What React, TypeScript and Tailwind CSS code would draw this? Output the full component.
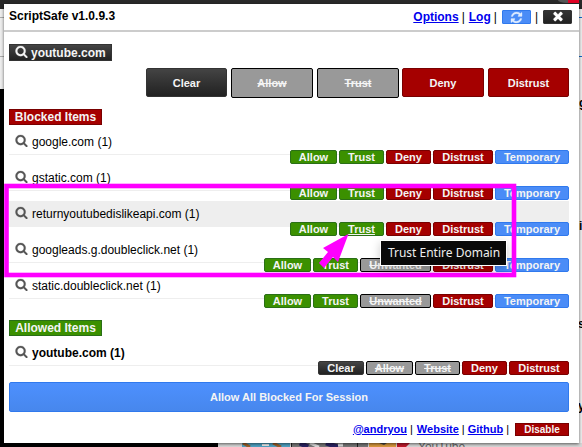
import React from "react";

type Tone = "green" | "red" | "blue" | "dark" | "off";

const tones: Record<Tone, string> = {
  green: "bg-[#3b9000] border-[#2a6f17]",
  red: "bg-[#a50000] border-[#790000]",
  blue: "bg-[#4a8cf7] border-[#3079ed]",
  dark: "bg-linear-to-b from-[#444] to-[#222] border-[#333]",
  off: "bg-[#999] border-black line-through",
};

const widths: Record<string, string> = {
  Allow: "w-[47px]",
  Trust: "w-[45px]",
  Deny: "w-[45px]",
  Distrust: "w-[60px]",
  Temporary: "w-[74px]",
  Unwanted: "w-[71px]",
  Clear: "w-[46px]",
};

const icons = {
  search:
    "M1216 832q0-185-131.5-316.5T768 384 451.5 515.5 320 832t131.5 316.5T768 1280t316.5-131.5T1216 832zm512 832q0 52-38 90t-90 38q-54 0-90-38l-343-342q-179 124-399 124-143 0-273.5-55.5t-225-150-150-225T64 832t55.5-273.5 150-225 225-150T768 128t273.5 55.5 225 150 150 225T1472 832q0 220-124 399l343 343q37 37 37 90z",
  refresh:
    "M1639 1056q0 5-1 7-64 268-268 434.5T892 1664q-146 0-282.5-55T366 1452l-129 129q-19 19-45 19t-45-19-19-45v-448q0-26 19-45t45-19h448q26 0 45 19t19 45-19 45l-137 137q71 66 161 102t187 36q134 0 250-65t186-179q11-17 53-117 8-23 30-23h192q13 0 22.5 9.5t9.5 22.5zm25-800v448q0 26-19 45t-45 19h-448q-26 0-45-19t-19-45 19-45l138-138Q1097 384 896 384q-134 0-250 65T460 628q-11 17-53 117-8 23-30 23H178q-13 0-22.5-9.5T146 736v-7q65-268 270-434.5T896 128q146 0 284 55.5T1425 340l130-129q19-19 45-19t45 19 19 45z",
  times:
    "M1490 1322q0 40-28 68l-136 136q-28 28-68 28t-68-28l-294-294-294 294q-28 28-68 28t-68-28l-136-136q-28-28-28-68t28-68l294-294-294-294q-28-28-28-68t28-68l136-136q28-28 68-28t68 28l294 294 294-294q28-28 68-28t68 28l136 136q28 28 28 68t-28 68l-294 294 294 294q28 28 28 68z",
};

function Icon({ name, className }: { name: keyof typeof icons; className: string }) {
  return (
    <svg viewBox="0 0 1792 1792" fill="currentColor" stroke="currentColor" strokeWidth="30" className={`shrink-0 ${className}`}>
      <path d={icons[name]} />
    </svg>
  );
}

type Btn = [string, Tone];

function Small({ b, underline }: { b: Btn; underline?: boolean }) {
  return (
    <span
      className={`flex h-[14px] items-center justify-center rounded-[2px] border text-[11px] leading-[12px] font-bold text-[#f4f4f4] ${widths[b[0]]} ${tones[b[1]]} ${underline ? "underline" : ""}`}
    >
      {b[0]}
    </span>
  );
}

function Row({ name, buttons, hover, bold }: { name: string; buttons: Btn[]; hover?: boolean; bold?: boolean }) {
  return (
    <div className="h-9">
      <div
        className={`flex h-[26px] items-center border-b border-[#eee] pl-[6px] text-[12px] ${hover ? "bg-[#eee]" : ""} ${bold ? "font-bold" : ""}`}
      >
        <Icon name="search" className="mr-[4px] mb-[3px] size-[13px] text-[#555]" />
        <span>{name} (1)</span>
      </div>
      <div className="relative -mt-[5px] flex justify-end gap-[2px]">
        {buttons.map((b) => (
          <Small key={b[0]} b={b} underline={hover && b[0] === "Trust"} />
        ))}
      </div>
    </div>
  );
}

const full: Btn[] = [["Allow", "green"], ["Trust", "green"], ["Deny", "red"], ["Distrust", "red"], ["Temporary", "blue"]];
const ad: Btn[] = [["Allow", "green"], ["Trust", "green"], ["Unwanted", "off"], ["Distrust", "red"], ["Temporary", "blue"]];
const top: Btn[] = [["Clear", "dark"], ["Allow", "off"], ["Trust", "off"], ["Deny", "red"], ["Distrust", "red"]];
const link = "text-[#0000ee] underline";

function Backdrop() {
  return (
    <svg className="absolute inset-0" width="582" height="447" viewBox="0 0 582 447">
      <rect width="582" height="447" fill="#ededed" />
      <rect width="582" height="9" fill="#292929" />
      <ellipse cx="567" cy="0" rx="9" ry="3" fill="#555" />
      <rect x="568" width="11" height="3" fill="#e00024" />
      <path d="M0 17.5h4M0 56.5h4" stroke="#aaa" />
      <path d="M578 17.5h4M578 56.5h4" stroke="#1266c8" />
      <rect y="89" width="4" height="358" fill="#000" />
      <rect y="443" width="218" height="4" fill="#000" />
      <rect x="218" y="443" width="364" height="4" fill="#d6d6d6" />
      <rect x="242" y="443" width="48" height="4" fill="#4fa3c4" />
      <path d="M243 443l7 4M273 443l8 4" stroke="#9a5f2a" strokeWidth="3" />
      <path d="M262 445h7" stroke="#eee" strokeWidth="2" />
      <rect x="291" y="443" width="77" height="4" fill="#777" />
      <path d="M300 443l8 4M326 443l12 4" stroke="#2a2262" strokeWidth="5" />
      <path d="M310 443l9 4M338 445h5" stroke="#ddd" strokeWidth="3" />
      <path d="M291.5 443v4M357.5 443v4" stroke="#222" />
      <rect x="369" y="443" width="27" height="4" fill="#d9983d" />
      <path d="M379 443h8l-3 2z" fill="#444" />
      <path d="M397 443h13l-4 4h-9" fill="#c0192b" />
    </svg>
  );
}

export default function App() {
  return (
    <div
      className="relative h-[447px] w-[582px] overflow-hidden pt-1 pl-1 text-black"
      style={{ fontFamily: '"Liberation Sans", Arial, sans-serif' }}
    >
      <Backdrop />
      <div className="absolute top-[94px] left-[579px] text-[12px] font-bold">g</div>
      <div className="absolute top-[217px] left-[579px] text-[12px] font-bold">i</div>
      <div className="absolute top-[315px] left-[578px] text-[12px] font-bold">s</div>
      <div className="absolute top-[397px] left-[578px] text-[12px] font-bold">y</div>
      <div className="absolute top-[441px] left-[418px] text-[12px] leading-[13px] text-[#666]">YouTube</div>

      <main className="relative flex h-[439px] w-[575px] flex-col bg-white shadow-[0_1px_3px_rgba(0,0,0,0.6)]">
        <header className="flex h-[28px] shrink-0 items-center justify-between border-b-2 border-[#ccc] pr-[7px] pl-[5px] text-[12px] font-bold">
          <span className="-mt-[2px]">ScriptSafe v1.0.9.3</span>
          <div className="flex items-center">
            <span className={link}>Options</span>
            <span className="mr-[4px] ml-[3px] font-normal">|</span>
            <span className={link}>Log</span>
            <span className="ml-[3px] font-normal">|</span>
            <span className="ml-[5px] flex h-[14px] w-[29px] items-center justify-center rounded-[1px] border border-[#3079ed] bg-[#4a8cf7]">
              <Icon name="refresh" className="size-[13px] text-[#ddebff]" />
            </span>
            <span className="ml-[4px] font-normal">|</span>
            <span className="ml-[5px] flex h-[14px] w-[29px] items-center justify-center rounded-[1px] border border-[#333] bg-linear-to-b from-[#333] to-[#222]">
              <Icon name="times" className="mb-[2px] size-[14px] text-white" />
            </span>
          </div>
        </header>

        <div className="flex flex-col pr-[10px] pl-[5px]">
          <div className="mt-[12px] flex h-[17px] w-[103px] items-center border border-[#333] bg-linear-to-b from-[#444] to-[#222] pl-[5px] text-[12px] font-bold text-[#f4f4f4]">
            <Icon name="search" className="mr-[3px] mb-[2px] size-[13px]" />
            youtube.com
          </div>

          <div className="mt-[7px] flex justify-end">
            {top.map((b, i) => (
              <span
                key={b[0]}
                className={`flex items-center justify-center rounded-[2px] border pt-px text-[11px] font-bold text-[#f4f4f4] ${i === 1 || i === 2 ? "h-[30px]" : "h-[29px]"} ${i === 0 || i === 4 ? "w-[81px]" : "w-[82px]"} ${i === 0 ? "" : i === 3 ? "ml-[3px]" : "ml-[4px]"} ${tones[b[1]]}`}
              >
                {b[0]}
              </span>
            ))}
          </div>

          <h2 className="mt-[11px] flex h-[16px] w-[93px] items-center justify-center border border-[#790000] bg-[#a50000] text-[12px] font-bold text-[#f4f4f4]">
            Blocked Items
          </h2>
          <div className="mt-[4px]">
            <Row name="google.com" buttons={full} />
            <Row name="gstatic.com" buttons={full} />
            <Row name="returnyoutubedislikeapi.com" buttons={full} hover />
            <Row name="googleads.g.doubleclick.net" buttons={ad} />
            <Row name="static.doubleclick.net" buttons={ad} />
          </div>

          <h2 className="mt-[11px] flex h-[16px] w-[93px] items-center justify-center border border-[#2a6f17] bg-[#3b9000] text-[12px] font-bold text-[#f4f4f4]">
            Allowed Items
          </h2>
          <div className="mt-[4px]">
            <Row name="youtube.com" buttons={top} bold />
          </div>

          <div className="mt-[6px] flex h-[30px] items-center justify-center rounded-[2px] border border-[#3079ed] bg-linear-to-b from-[#4d90fe] to-[#4787ed] text-[11px] font-bold text-[#f4f4f4]">
            Allow All Blocked For Session
          </div>

          <footer className="mt-[10px] flex h-[14px] items-center justify-end text-[11px] font-bold">
            <span className={link}>@andryou</span>
            <span className="mr-[4px] ml-[3px] font-normal">|</span>
            <span className={link}>Website</span>
            <span className="mx-[3px] font-normal">|</span>
            <span className={link}>Github</span>
            <span className="ml-[3px] font-normal">|</span>
            <span className="ml-[6px] flex h-[13px] w-[54px] items-center justify-center border border-[#790000] bg-[#a50000] text-[10px] leading-[11px] text-[#f4f4f4]">
              Disable
            </span>
          </footer>
        </div>
      </main>

      <svg className="absolute inset-0" width="582" height="447" viewBox="0 0 582 447">
        <rect x="6.5" y="186" width="507.5" height="89" fill="none" stroke="#ff00ff" strokeWidth="4.6" />
        <path d="M348.5 234L323 248l5 4-9 11 5 5 9-11 5 5z" fill="#ff00ff" />
      </svg>
      <div
        className="absolute top-[240px] left-[380px] flex h-[26px] w-[127px] items-center justify-center border border-white bg-[#090909] pl-px text-[12px] text-[#eee] shadow-[0_3px_10px_rgba(0,0,0,0.2)]"
        style={{ fontFamily: '"Noto Sans", sans-serif' }}
      >
        Trust Entire Domain
      </div>
    </div>
  );
}
